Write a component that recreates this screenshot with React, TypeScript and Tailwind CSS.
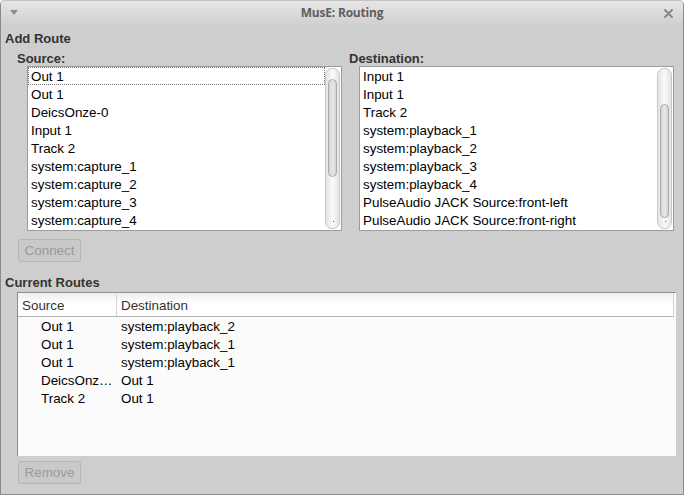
import React from "react";

const sourceItems = [
  "Out 1",
  "Out 1",
  "DeicsOnze-0",
  "Input 1",
  "Track 2",
  "system:capture_1",
  "system:capture_2",
  "system:capture_3",
  "system:capture_4",
];

const destItems = [
  "Input 1",
  "Input 1",
  "Track 2",
  "system:playback_1",
  "system:playback_2",
  "system:playback_3",
  "system:playback_4",
  "PulseAudio JACK Source:front-left",
  "PulseAudio JACK Source:front-right",
];

const routes = [
  ["Out 1", "system:playback_2"],
  ["Out 1", "system:playback_1"],
  ["Out 1", "system:playback_1"],
  ["DeicsOnze-0", "Out 1"],
  ["Track 2", "Out 1"],
];

function ScrollBar({ top, height }: { top: number; height: number }) {
  return (
    <div className="absolute right-[1px] top-[1px] bottom-[1px] w-[15px] rounded-[7px] border border-[#c6c6c6] bg-gradient-to-r from-[#e4e4e4] via-[#fafafa] to-[#e4e4e4]">
      <div
        className="absolute left-[2px] w-[9px] rounded-[5px] border border-[#a9a9a9] bg-gradient-to-r from-[#d4d4d4] via-[#e8e8e8] to-[#d4d4d4]"
        style={{ top, height }}
      />
      <div className="absolute left-[7px] bottom-[6px] w-[1px] h-[1px] bg-[#555]" />
    </div>
  );
}

function ListBox({
  items,
  focusFirst,
  thumbTop,
  thumbHeight,
}: {
  items: string[];
  focusFirst?: boolean;
  thumbTop: number;
  thumbHeight: number;
}) {
  return (
    <div className="relative ml-[10px] h-[165px] border border-[#9c9c9c] bg-white overflow-hidden">
      <div className="flex flex-col">
        {items.map((t, i) => (
          <div
            key={i}
            className={
              "h-[18px] pt-[2px] leading-[16px] pl-[3px] text-[13.4px] text-black whitespace-nowrap mr-[16px] " +
              (focusFirst && i === 0 ? "outline outline-1 outline-dotted outline-[#777] -outline-offset-1" : "")
            }
          >
            {t}
          </div>
        ))}
      </div>
      <ScrollBar top={thumbTop} height={thumbHeight} />
    </div>
  );
}

function DisabledButton({ label }: { label: string }) {
  return (
    <div className="ml-[17px] w-[63px] h-[23px] rounded-[3px] border border-[#b4b4b4] bg-[#c9c9c9] text-[#9a9a9a] text-[13.4px] leading-[21px] text-center">
      {label}
    </div>
  );
}

export default function App() {
  return (
    <div className="w-[684px] h-[495px] flex flex-col bg-[#cecece] border-x border-b border-[#8a8a8a] rounded-t-[5px] overflow-hidden font-['Liberation_Sans',Arial,sans-serif]">
      {/* Title bar */}
      <div className="relative h-[25px] shrink-0 flex items-center justify-center bg-gradient-to-b from-[#e6e6e6] to-[#d0d0d0] border-t border-[#c4c4c4]">
        <svg className="absolute left-[9px] top-[9px]" width="8" height="6" viewBox="0 0 8 6">
          <polygon points="0,0 8,0 4,5" fill="#8a8a8a" />
        </svg>
        <span className="font-['Open_Sans',sans-serif] font-bold text-[12px] text-[#5e5e5e] tracking-[-0.2px]">
          MusE: Routing
        </span>
        <svg className="absolute right-[10px] top-[8px]" width="9" height="9" viewBox="0 0 9 9">
          <path d="M1 1 L8 8 M8 1 L1 8" stroke="#848484" strokeWidth="1.8" strokeLinecap="round" />
        </svg>
      </div>

      {/* Add Route */}
      <div className="mt-[6px] h-[16px] leading-[16px] pl-[4px] text-[13px] font-bold text-[#333]">Add Route</div>

      <div className="grid grid-cols-[325px_325px] gap-x-[7px] pl-[16px] mt-[3px]">
        <div className="flex flex-col">
          <div className="h-[16px] leading-[18px] text-[13px] font-bold text-[#333]">Source:</div>
          <ListBox items={sourceItems} focusFirst thumbTop={10} thumbHeight={98} />
        </div>
        <div className="flex flex-col">
          <div className="h-[16px] leading-[18px] text-[13px] font-bold text-[#333]">Destination:</div>
          <ListBox items={destItems} thumbTop={35} thumbHeight={114} />
        </div>
      </div>

      <div className="mt-[8px]">
        <DisabledButton label="Connect" />
      </div>

      <div className="mt-[13px] h-[16px] leading-[16px] pl-[4px] text-[13px] font-bold text-[#333]">Current Routes</div>

      {/* Routes tree */}
      <div className="mt-[1px] ml-[16px] w-[659px] h-[164px] flex flex-col bg-[#fbfbfb] border-l border-t border-[#8f8f8f]">
        <div className="h-[24px] shrink-0 flex bg-gradient-to-b from-[#efefef] via-white to-white border-b border-[#b2b2b2] border-r border-r-[#d0d0d0] mr-[2px] text-[13.4px] text-[#333]">
          <div className="w-[99px] pl-[4px] pt-[2px] leading-[21px] border-r border-[#d6d6d6]">Source</div>
          <div className="pl-[4px] pt-[2px] leading-[21px]">Destination</div>
        </div>
        <div className="flex flex-col pt-[1px]">
          {routes.map(([s, d], i) => (
            <div key={i} className="h-[18px] leading-[18px] flex text-[13.4px] text-black">
              <div className="w-[100px] pl-[23px] pr-[2px] truncate">{s}</div>
              <div className="pl-[3px]">{d}</div>
            </div>
          ))}
        </div>
      </div>

      <div className="mt-[5px]">
        <DisabledButton label="Remove" />
      </div>
    </div>
  );
}
